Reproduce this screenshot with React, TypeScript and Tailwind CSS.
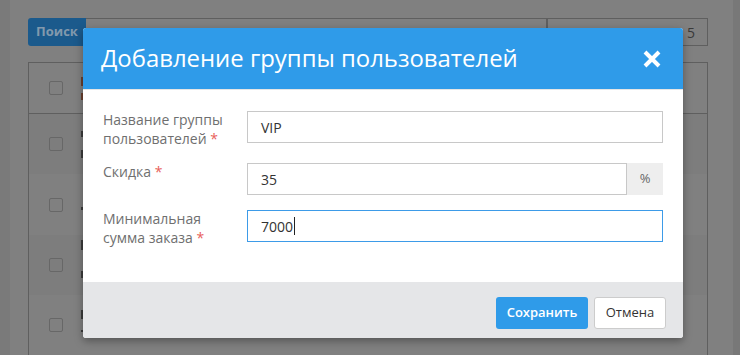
import React from "react";

const font = { fontFamily: '"Open Sans", "Noto Sans", sans-serif' };

function Checkbox() {
  return <div className="w-[14px] h-[14px] rounded-[2px] border border-[#676767]" />;
}

function Row({ shade, h, children }: { shade: string; h: string; children: React.ReactNode }) {
  return (
    <div className={`flex ${h} ${shade}`}>
      <div className="w-[52px] flex items-center justify-center pl-[1px]">
        <Checkbox />
      </div>
      <div className="w-[2px] flex flex-col">{children}</div>
    </div>
  );
}

function Field({
  label,
  children,
}: {
  label: React.ReactNode;
  children: React.ReactNode;
}) {
  return (
    <div className="flex items-start mb-[15px]">
      <div className="w-[144px] text-[14px] leading-[18.5px] text-[#6f6f6f] pr-[10px]">
        {label}
      </div>
      <div className="flex-1">{children}</div>
    </div>
  );
}

const Star = () => <span className="text-[#e8605a]"> *</span>;

export default function App() {
  return (
    <div
      className="relative w-[740px] h-[355px] overflow-hidden bg-[#808080] flex"
      style={font}
    >
      {/* background page (dimmed) */}
      <div className="w-[10px] h-full bg-[#7a7a7a]" />
      <div className="flex-1 pl-[18px] pr-[25px] pt-[18px] flex flex-col">
        <div className="flex h-[31px]">
          <div className="w-[58px] bg-[#1b5a8c] rounded-l-[3px] flex items-center justify-center text-[13px] font-bold text-[#8299ad]">
            Поиск
          </div>
          <div className="w-[461px] border border-[#5f5f5f] border-l-0" />
          <div className="flex-1 border border-[#5f5f5f] flex items-center justify-end pr-[12px] text-[14px] text-[#3a3a3a]">
            5
          </div>
        </div>
        <div className="mt-[16px] border-l border-r border-t border-[#5f5f5f] flex flex-col">
          <div className="flex h-[51px] border-b border-[#5f5f5f] bg-[#808080]">
            <div className="w-[52px] flex items-center justify-center pl-[1px]">
              <Checkbox />
            </div>
            <div className="w-[2px] flex flex-col">
              <div className="mt-[14px] h-[9px] bg-[#6b3f2e]" />
              <div className="mt-[7px] h-[7px] bg-[#6b3f2e]" />
            </div>
          </div>
          <Row shade="bg-[#7d7d7d]" h="h-[60px]">
            <div className="mt-[17px] h-[6px] bg-[#3c3c3c]" />
            <div className="mt-[13px] h-[8px] bg-[#3c3c3c]" />
          </Row>
          <Row shade="bg-[#808080]" h="h-[61px]">
            <div className="mt-[33px] h-[3px] bg-[#3c3c3c]" />
          </Row>
          <Row shade="bg-[#7d7d7d]" h="h-[60px]">
            <div className="mt-[5px] h-[10px] bg-[#3c3c3c]" />
            <div className="mt-[21px] h-[7px] bg-[#3c3c3c]" />
          </Row>
          <Row shade="bg-[#808080]" h="h-[60px]">
            <div className="mt-[15px] h-[9px] bg-[#3c3c3c]" />
            <div className="mt-[11px] h-[2px] bg-[#3c3c3c]" />
          </Row>
        </div>
      </div>
      <div className="w-[7px] h-full bg-[#787878]" />

      {/* modal */}
      <div className="absolute left-[83px] top-[28px] w-[600px] rounded-[3px] bg-white shadow-[0_3px_9px_rgba(0,0,0,0.35)] flex flex-col">
        <div className="h-[62px] bg-[#2f9be9] rounded-t-[3px] flex items-center justify-between pl-[18px] pr-[22px] border-b border-[#e5e5e5]">
          <span className="text-[23.9px] text-white leading-none pb-[1px]">
            Добавление группы пользователей
          </span>
          <svg width="18" height="18" viewBox="0 0 18 18" className="mt-[1px]">
            <path d="M2 2 L16 16 M16 2 L2 16" stroke="white" strokeWidth="4" strokeLinecap="butt" />
          </svg>
        </div>
        <div className="pt-[21px] px-[20px] pb-[20px]">
          <Field
            label={
              <>
                Название группы
                <br />
                пользователей
                <Star />
              </>
            }
          >
            <div className="h-[32px] border border-[#c8c8c8] flex items-center pl-[13px] text-[14px] text-[#333]">
              VIP
            </div>
          </Field>
          <Field
            label={
              <>
                Скидка
                <Star />
              </>
            }
          >
            <div className="flex h-[32px]">
              <div className="flex-1 border border-[#c8c8c8] flex items-center pl-[13px] text-[14px] text-[#333]">
                35
              </div>
              <div className="w-[36px] bg-[#eeeeee] flex items-center justify-center text-[13px] text-[#666]">
                %
              </div>
            </div>
          </Field>
          <Field
            label={
              <>
                Минимальная
                <br />
                сумма заказа
                <Star />
              </>
            }
          >
            <div className="h-[32px] border border-[#3d9be8] flex items-center pl-[13px] text-[14px] text-[#333]">
              7000
              <span className="w-[1px] h-[18px] bg-[#222] ml-[1px]" />
            </div>
          </Field>
        </div>
        <div className="h-[56px] bg-[#e5e6e8] rounded-b-[3px] flex items-start justify-end gap-[6px] pt-[15px] pr-[17px]">
          <div className="w-[92px] h-[32px] rounded-[3px] bg-[#2f9be9] flex items-center justify-center text-[13px] font-semibold text-white">
            Сохранить
          </div>
          <div className="w-[72px] h-[32px] rounded-[3px] bg-white border border-[#cccccc] flex items-center justify-center text-[13px] text-[#333]">
            Отмена
          </div>
        </div>
      </div>
    </div>
  );
}
